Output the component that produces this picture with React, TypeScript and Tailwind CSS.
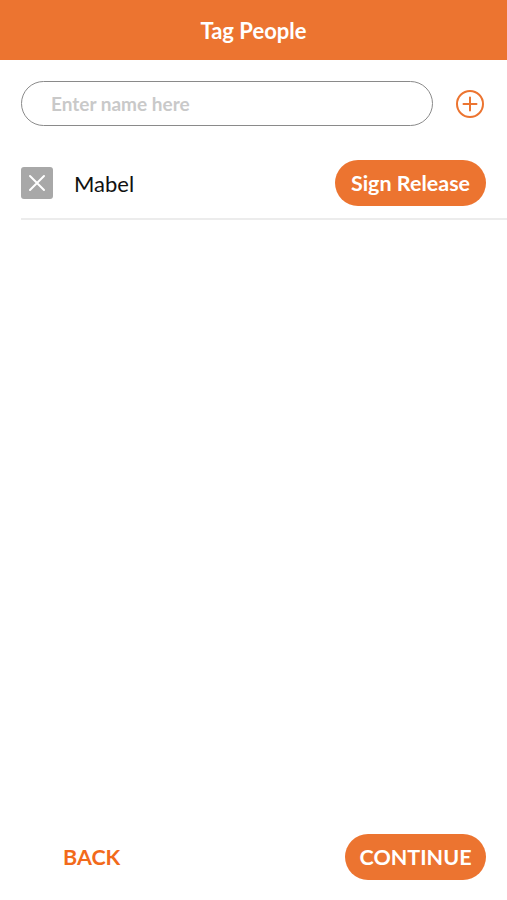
import React, { useState } from 'react';

const PlusCircle = () => (
  <svg width="30" height="30" viewBox="0 0 30 30" fill="none">
    <circle cx="15" cy="15" r="13" stroke="#EC7430" strokeWidth="2" />
    <path d="M15 8.5v13M8.5 15h13" stroke="#EC7430" strokeWidth="2" strokeLinecap="round" />
  </svg>
);

const App: React.FC = () => {
  const [name, setName] = useState('');
  const people = ['Mabel'];

  return (
    <div className="flex h-[900px] w-full flex-col bg-white font-['Lato','Open_Sans',sans-serif]">
      {/* Header */}
      <div className="flex h-[60px] shrink-0 items-center justify-center bg-[#EC7430]">
        <h1 className="text-[22px] font-bold text-white">Tag People</h1>
      </div>

      {/* Name input */}
      <div className="mt-[21px] flex items-center pl-[21px] pr-[22px]">
        <input
          value={name}
          onChange={(e) => setName(e.target.value)}
          placeholder="Enter name here"
          className="h-[45px] w-[412px] rounded-full border border-[#8a8a8a] px-[29px] text-[19px] font-bold text-black outline-none placeholder:text-[#c9c9c9]"
        />
        <button className="ml-auto flex h-[30px] w-[30px] items-center justify-center">
          <PlusCircle />
        </button>
      </div>

      {/* Tagged list */}
      <div className="ml-[21px] mt-[34px]">
        {people.map((p) => (
          <div key={p} className="flex items-center border-b-2 border-[#ececec] pb-[12px] pr-[21px]">
            <div className="flex h-[32px] w-[32px] items-center justify-center rounded-[3px] bg-[#a8a8a8]">
              <svg width="20" height="20" viewBox="0 0 20 20">
                <path d="M3 3l14 14M17 3L3 17" stroke="white" strokeWidth="2" strokeLinecap="round" />
              </svg>
            </div>
            <span className="ml-[21px] text-[22px] text-[#111]">{p}</span>
            <button className="ml-auto h-[46px] w-[151px] rounded-full bg-[#EC7430] text-[21.5px] font-bold text-white">
              Sign Release
            </button>
          </div>
        ))}
      </div>

      <div className="flex-1" />

      {/* Footer */}
      <div className="mb-[20px] flex items-center justify-between pl-[63px] pr-[21px]">
        <button className="text-[21.5px] font-bold text-[#F26A1B]">BACK</button>
        <button className="h-[46px] w-[141px] rounded-full bg-[#EC7430] text-[21.5px] font-bold text-white">
          CONTINUE
        </button>
      </div>
    </div>
  );
};

export default App;
